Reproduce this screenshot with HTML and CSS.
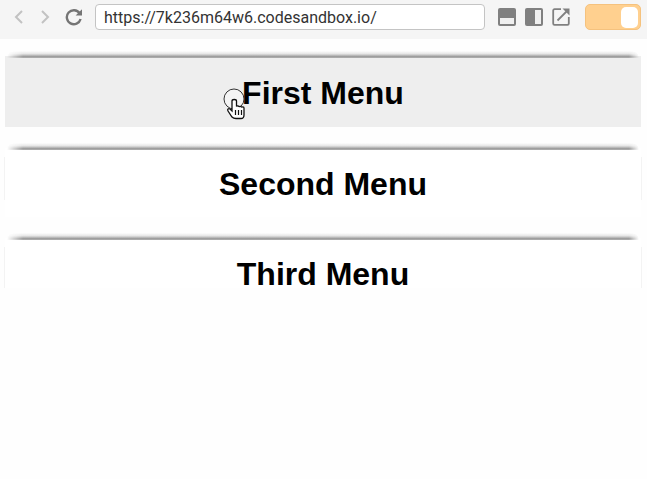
FILE: index.html

```html
<!DOCTYPE html>
<html>
<head>
  <title>Menu</title>
  <meta charset="utf-8">
  <link rel="stylesheet" href="styles.css">
</head>
<body>
  <div class="toolbar">
    <div class="nav-icons">
      <svg class="icon-nav" viewBox="0 0 10 16"><path d="M8 2 L2 8 L8 14"/></svg>
      <svg class="icon-nav" viewBox="0 0 10 16"><path d="M2 2 L8 8 L2 14"/></svg>
      <svg class="icon-reload" viewBox="0 0 18 18">
        <path class="reload-arc" d="M14.6 5.2 A7 7 0 1 0 15.6 11"/>
        <path class="reload-head" d="M17 1.2 V7.6 H10.6 Z"/>
      </svg>
    </div>
    <div class="address">https://7k236m64w6.codesandbox.io/</div>
    <div class="view-icons">
      <svg class="icon-view" viewBox="0 0 18 18">
        <rect width="18" height="18" rx="2" fill="#808080"/>
        <rect x="2" y="10" width="14" height="6" fill="#f0f0f0"/>
      </svg>
      <svg class="icon-view" viewBox="0 0 18 18">
        <rect width="18" height="18" rx="2" fill="#808080"/>
        <rect x="10" y="2" width="6" height="14" fill="#f0f0f0"/>
      </svg>
      <svg class="icon-view" viewBox="0 0 18 18">
        <path class="open-box" d="M9 1.2 H2.5 A1.3 1.3 0 0 0 1.2 2.5 V15.5 A1.3 1.3 0 0 0 2.5 16.8 H15.5 A1.3 1.3 0 0 0 16.8 15.5 V9"/>
        <path class="open-box" d="M5.5 12.5 L16 2"/>
        <path class="open-head" d="M10.5 0.5 H17.5 V7.5 Z"/>
      </svg>
    </div>
    <div class="toggle"><div class="toggle-knob"></div></div>
  </div>

  <div class="menu-list">
    <div class="menu-item active">First Menu</div>
    <div class="menu-item second">Second Menu</div>
    <div class="menu-item third">Third Menu</div>
    <svg class="cursor" viewBox="0 0 24 32">
      <circle cx="11" cy="11" r="10" fill="#f4f4f4" stroke="#333" stroke-width="1"/>
      <path d="M9 13 V23 L7 21 C5.5 20 4 21.500 5 23 L9 29 C10 30 11 30.500 13 30.500 H18 C20 30.500 21 29 21 27 V20 C21 18.500 19 18.500 18.500 19.500 C18.500 18 16.500 18 16 19 C16 17.500 14 17.500 13.500 18.500 V13 C13.500 11 9 11 9 13 Z" fill="#fff" stroke="#111" stroke-width="1.300"/>
      <path d="M12.500 22 V27 M15.500 22 V27 M18.500 22 V27" stroke="#111" stroke-width="1.200"/>
    </svg>
  </div>
</body>
</html>
```

FILE: styles.css

```css
body {
  font-family: "Liberation Sans", Arial, sans-serif;
  margin: 0;
  background-color: #fefefe;
}

.toolbar {
  display: flex;
  align-items: center;
  height: 39px;
  padding: 0 6px 5px 14px;
  box-sizing: border-box;
  background-color: #f5f5f5;
}

.nav-icons {
  display: flex;
  align-items: center;
  gap: 16px;
  width: 81px;
}

.icon-nav {
  width: 10px;
  height: 16px;
  fill: none;
  stroke: #c2c2c2;
  stroke-width: 2;
}

.icon-reload {
  width: 18px;
  height: 18px;
  margin-left: -1px;
}

.reload-arc {
  fill: none;
  stroke: #757575;
  stroke-width: 2.400;
}

.reload-head {
  fill: #757575;
}

.address {
  width: 390px;
  height: 26px;
  line-height: 25px;
  padding-left: 8px;
  box-sizing: border-box;
  background-color: #fff;
  border: 1px solid #c4c4c4;
  border-radius: 4px;
  font-family: Roboto, sans-serif;
  font-size: 16px;
  color: #333;
}

.view-icons {
  display: flex;
  align-items: center;
  gap: 9px;
  margin-left: 13px;
}

.icon-view {
  width: 18px;
  height: 18px;
}

.open-box {
  fill: none;
  stroke: #808080;
  stroke-width: 1.800;
}

.open-head {
  fill: #808080;
}

.toggle {
  display: flex;
  align-items: center;
  justify-content: flex-end;
  width: 56px;
  height: 26px;
  margin-left: 15px;
  padding-right: 2px;
  box-sizing: border-box;
  background-color: #ffd08f;
  border: 1px solid #f5c27e;
  border-radius: 5px;
}

.toggle-knob {
  width: 17px;
  height: 21px;
  background-color: #fff;
  border-radius: 5px;
}

.menu-list {
  position: relative;
  display: flex;
  flex-direction: column;
  gap: 21px;
  padding: 17px 6px 0 5px;
}

.menu-item {
  position: relative;
  box-sizing: border-box;
  padding-top: 22px;
  line-height: 28px;
  text-align: center;
  font-size: 32px;
  font-weight: bold;
  color: #000;
  background-color: #fff;
}

/* soft shadow along the top of each item, fading out at both ends */
.menu-item::before {
  content: "";
  position: absolute;
  top: -5px;
  left: 2px;
  right: 2px;
  height: 7px;
  background-image: linear-gradient(rgba(120, 120, 120, 0), #e6e6e6 40%, #929292 85%, #c0c0c0);
  border-radius: 7px 7px 0 0 / 6px 6px 0 0;
  -webkit-mask-image: linear-gradient(90deg, transparent, #000 16px, #000 calc(100% - 10px), transparent);
  mask-image: linear-gradient(90deg, transparent, #000 16px, #000 calc(100% - 10px), transparent);
}

/* faint side edges */
.menu-item::after {
  content: "";
  position: absolute;
  left: -1px;
  right: -1px;
  top: 9px;
  bottom: 17px;
  border-left: 1px solid #f3f3f3;
  border-right: 1px solid #f3f3f3;
}

.menu-item.active {
  height: 71px;
  padding-top: 23px;
  background-color: #eee;
}

.menu-item.active::after {
  display: none;
}

.menu-item.second {
  height: 69px;
}

.menu-item.third {
  height: 50px;
}

.menu-item.third::after {
  bottom: 0;
}

.cursor {
  position: absolute;
  left: 223px;
  top: 49px;
  width: 24px;
  height: 32px;
}
```
